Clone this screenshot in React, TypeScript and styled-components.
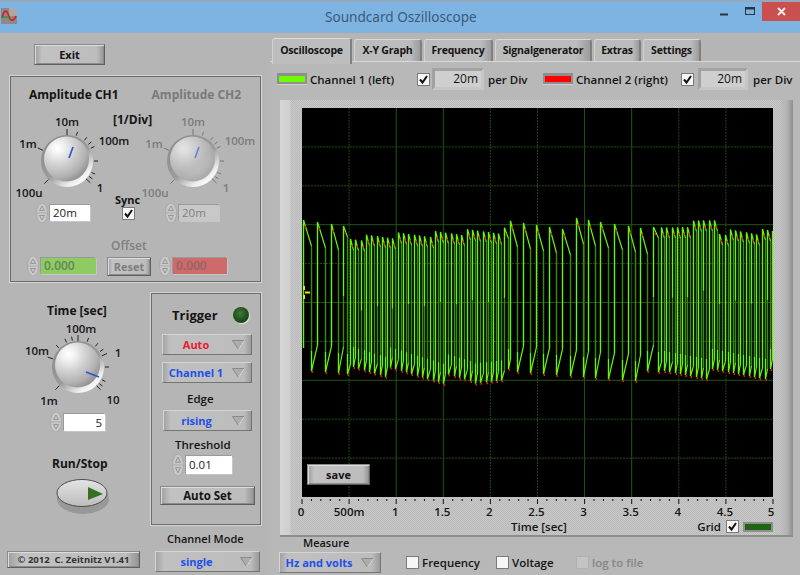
import React from 'react'
import styled, { createGlobalStyle } from 'styled-components'

const GlobalStyle = createGlobalStyle`
  html, body {
    margin: 0;
    padding: 0;
    background: #b5b5b5;
  }
  * {
    box-sizing: border-box;
  }
`

const Page = styled.div`
  width: 800px;
  height: 575px;
  overflow: hidden;
  background: #b5b5b5;
  color: #141414;
  font-family: 'Open Sans', 'Liberation Sans', sans-serif;
  font-size: 12px;
  font-weight: 600;
  display: flex;
  flex-direction: column;
`

const TitleBar = styled.div`
  height: 33px;
  flex: none;
  display: flex;
  align-items: flex-start;
  background: #7eb4e2;
  border-top: 2px solid #93a9bd;
  border-bottom: 1px solid #8fb0cc;
`

const AppIcon = styled.svg`
  width: 16px;
  height: 16px;
  margin: 6px 0 0 1px;
`

const TitleText = styled.div`
  margin: 5px 0 0 308px;
  width: 389px;
  color: #3d5a78;
  font-family: 'Noto Sans', 'Liberation Sans', sans-serif;
  font-size: 13.6px;
  font-weight: 400;
  line-height: 20px;
`

const WindowButton = styled.div<{ $gap?: number; $drop?: number }>`
  width: 21px;
  height: 19px;
  margin-left: ${(p) => p.$gap || 0}px;
  padding-top: ${(p) => p.$drop || 0}px;
  display: flex;
  align-items: center;
  justify-content: center;
`

const CloseButton = styled.div`
  margin-left: auto;
  width: 38px;
  height: 19px;
  background: #c9504f;
  display: flex;
  align-items: center;
  justify-content: center;
`

const Body = styled.div`
  flex: 1;
  display: flex;
  min-height: 0;
`

const LeftColumn = styled.div`
  width: 270px;
  flex: none;
  display: flex;
  flex-direction: column;
`

const RightColumn = styled.div`
  flex: 1;
  display: flex;
  flex-direction: column;
  min-width: 0;
`

const RaisedButton = styled.div<{ $w: number; $h: number }>`
  width: ${(p) => p.$w}px;
  height: ${(p) => p.$h}px;
  display: flex;
  align-items: center;
  justify-content: center;
  flex: none;
  border: 1px solid #5e5e5e;
  border-top-color: #8a8a8a;
  border-left-color: #8a8a8a;
  box-shadow: inset 1px 1px 0 #dcdcdc, inset -1px -1px 0 #8c8c8c;
  background: linear-gradient(90deg, #9e9e9e 0, #c2c2c2 10%, #bcbcbc 90%, #929292 100%);
`

const ExitButton = styled(RaisedButton)`
  margin: 11px 0 0 34px;
  font-size: 11px;
  font-weight: 700;
`

const GroovePanel = styled.div`
  border: 1px solid #d4d4d4;
  outline: 1px solid #6c6c6c;
  outline-offset: -2px;
`

const AmplitudePanel = styled(GroovePanel)`
  margin: 10px 0 0 9px;
  width: 253px;
  height: 208px;
  padding: 10px 0 0 2px;
  flex: none;
`

const AmplitudeTitles = styled.div`
  display: flex;
  height: 18px;
  padding-left: 17px;
  gap: 33px;
  font-size: 12px;
  font-weight: 700;
  line-height: 18px;
`

const DimText = styled.span`
  color: #7a7a7a;
`

const KnobRow = styled.div`
  display: grid;
  grid-template-columns: 101px 41px 1fr;
  margin-top: 9px;
`

const KnobCell = styled.div<{ $dial: number; $spin: number }>`
  display: flex;
  flex-direction: column;
  padding-top: 8px;
  & > svg {
    margin-left: ${(p) => p.$dial}px;
  }
  & > div {
    margin-left: ${(p) => p.$spin}px;
  }
`

const MiddleCell = styled.div`
  display: flex;
  flex-direction: column;
  align-items: flex-start;
`

const DivLabel = styled.div`
  height: 14px;
  line-height: 14px;
  font-weight: 700;
  white-space: nowrap;
`

const SyncLabel = styled.div`
  margin: 66px 0 0 2px;
  height: 14px;
  line-height: 14px;
  font-size: 11px;
  font-weight: 700;
`

const SyncCheck = styled.div`
  margin: 0 0 0 9px;
`

const OffsetLabel = styled.div`
  margin: 16px 0 0 99px;
  height: 14px;
  line-height: 14px;
  color: #808080;
`

const OffsetRow = styled.div`
  display: flex;
  align-items: center;
  margin-top: 3px;
  padding-left: 15px;
`

const ResetButton = styled(RaisedButton)`
  margin: 0 8px 0 11px;
  color: #7e7e7e;
  font-size: 11px;
  font-weight: 700;
`

const SpinnerBox = styled.div<{ $top?: number }>`
  display: flex;
  align-items: center;
  gap: 2px;
  margin-top: ${(p) => p.$top || 0}px;
`

const SpinArrows = styled.svg<{ $h: number }>`
  width: 12px;
  height: ${(p) => p.$h}px;
  flex: none;
`

const Field = styled.div<{ $w: number; $h: number; $bg: string; $fg?: string; $right?: boolean }>`
  width: ${(p) => p.$w}px;
  height: ${(p) => p.$h}px;
  background: ${(p) => p.$bg};
  color: ${(p) => p.$fg || '#222'};
  text-align: ${(p) => (p.$right ? 'right' : 'left')};
  padding: 0 3px;
  line-height: ${(p) => p.$h}px;
  font-size: 11.5px;
  font-weight: 400;
  box-shadow: -1px -1px 0 #9a9a9a, 1px 1px 0 #c6c6c6;
`

const OffsetField = styled(Field)`
  font-size: 12px;
  font-weight: 600;
`

const LowerRow = styled.div`
  flex: 1;
  display: flex;
  min-height: 0;
`

const TimeColumn = styled.div`
  width: 150px;
  flex: none;
  display: flex;
  flex-direction: column;
  align-items: flex-start;
`

const TimeLabel = styled.div`
  margin: 20px 0 0 47px;
  height: 16px;
  line-height: 16px;
  font-weight: 700;
`

const TimeDial = styled.div`
  margin: 8px 0 0 38px;
  height: 80px;
  display: flex;
`

const TimeSpinner = styled.div`
  margin: 5px 0 0 50px;
`

const RunLabel = styled.div`
  margin: 24px 0 0 52px;
  height: 16px;
  line-height: 16px;
  font-weight: 700;
`

const RunIcon = styled.svg`
  margin: 7px 0 0 54px;
  width: 60px;
  height: 40px;
  flex: none;
`

const CopyrightBox = styled(RaisedButton)`
  margin: auto 0 7px 7px;
  font-size: 9.5px;
  font-weight: 700;
  color: #333;
`

const TriggerColumn = styled.div`
  width: 120px;
  flex: none;
  display: flex;
  flex-direction: column;
`

const TriggerPanel = styled(GroovePanel)`
  margin-top: 9px;
  width: 112px;
  height: 234px;
  flex: none;
  display: flex;
  flex-direction: column;
  align-items: flex-start;
  padding: 13px 0 0 9px;
`

const TriggerHead = styled.div`
  display: flex;
  align-items: center;
  height: 18px;
  padding-left: 12px;
  gap: 15px;
  font-size: 13px;
  font-weight: 700;
`

const Led = styled.div`
  width: 16px;
  height: 16px;
  border-radius: 50%;
  background: radial-gradient(circle at 45% 40%, #3f7a34 0, #1f4f1c 55%, #16331a 100%);
  box-shadow: 1px 1px 1px #e2e2e2;
`

const Dropdown = styled.div<{ $w: number; $color: string; $top?: number; $left?: number }>`
  position: relative;
  width: ${(p) => p.$w}px;
  height: 21px;
  margin: ${(p) => p.$top || 0}px 0 0 ${(p) => p.$left || 0}px;
  flex: none;
  display: flex;
  align-items: center;
  padding-right: 22px;
  justify-content: center;
  color: ${(p) => p.$color};
  font-size: 11px;
  font-weight: 700;
  border: 1px solid #8f8f8f;
  border-top-color: #d4d4d4;
  border-left-color: #d4d4d4;
  border-bottom-color: #757575;
  border-right-color: #757575;
  background: linear-gradient(90deg, #a4a4a4 0, #c0c0c0 8%, #bcbcbc 92%, #9a9a9a 100%);
`

const DropArrow = styled.svg`
  position: absolute;
  right: 6px;
  top: 5px;
  width: 13px;
  height: 10px;
`

const TriggerLabel = styled.div<{ $left: number; $top: number }>`
  margin: ${(p) => p.$top}px 0 0 ${(p) => p.$left}px;
  height: 16px;
  line-height: 16px;
  font-size: 11.5px;
  font-weight: 600;
`

const ThresholdRow = styled.div`
  margin: 1px 0 0 12px;
`

const AutoSetButton = styled(RaisedButton)`
  margin-top: 10px;
  font-weight: 700;
  font-size: 11.5px;
`

const ModeLabel = styled.div`
  margin: 5px 0 0 17px;
  height: 16px;
  line-height: 16px;
  font-size: 11px;
  white-space: nowrap;
`

const TabStrip = styled.div`
  margin-top: 4px;
  height: 24px;
  flex: none;
  display: flex;
  align-items: flex-end;
  padding-left: 2px;
  gap: 2px;
  font-size: 10.5px;
  font-weight: 700;
  letter-spacing: -0.2px;
`

const Tab = styled.div<{ $w: number; $active?: boolean }>`
  width: ${(p) => p.$w}px;
  height: ${(p) => (p.$active ? 26 : 22)}px;
  margin-bottom: ${(p) => (p.$active ? -3 : 0)}px;
  padding-bottom: ${(p) => (p.$active ? 3 : 1)}px;
  display: flex;
  align-items: center;
  justify-content: center;
  position: relative;
  z-index: ${(p) => (p.$active ? 2 : 1)};
  background: ${(p) => (p.$active ? '#bdbdbd' : 'linear-gradient(90deg, #bcbcbc 85%, #9c9c9c)')};
  border-top: 1px solid #dadada;
  border-left: 1px solid #d2d2d2;
  border-right: 2px solid #808080;
  border-radius: 3px 3px 0 0;
`

const TabBody = styled.div`
  flex: 1;
  border-top: 1px solid #d8d8d8;
  display: flex;
  flex-direction: column;
  min-height: 0;
  background: #b8b8b8;
`

const ChannelRow = styled.div`
  height: 38px;
  flex: none;
  display: flex;
  align-items: center;
  padding: 0 0 4px 7px;
  font-size: 11.5px;
`

const LegendSwatch = styled.div<{ $color: string }>`
  width: 30px;
  height: 12px;
  margin-top: -1px;
  flex: none;
  padding: 3px 2px;
  background: #8e8e8e;
  border-bottom: 1px solid #cfcfcf;
  &::after {
    content: '';
    display: block;
    height: 6px;
    background: ${(p) => p.$color};
  }
`

const ChannelName = styled.span<{ $w: number }>`
  width: ${(p) => p.$w}px;
  flex: none;
  margin-left: 3px;
  white-space: nowrap;
`

const CheckBox = styled.div<{ $disabled?: boolean }>`
  width: 13px;
  height: 13px;
  flex: none;
  background: ${(p) => (p.$disabled ? '#c4c4c4' : '#f6f6f6')};
  border: 1px solid ${(p) => (p.$disabled ? '#b0b0b0' : '#7a7a7a')};
  display: flex;
  align-items: center;
  justify-content: center;
`

const PerDivField = styled.div<{ $w: number; $gap: number; $lead: number }>`
  width: ${(p) => p.$w}px;
  height: 22px;
  flex: none;
  margin: 0 ${(p) => p.$gap}px 0 ${(p) => p.$lead}px;
  background: #cfcfcf;
  border: 3px solid #a2a2a2;
  border-right-color: #c6c6c6;
  border-bottom-color: #c6c6c6;
  text-align: right;
  padding-right: 3px;
  line-height: 16px;
  font-weight: 400;
  font-size: 12px;
`

const PerDivText = styled.span<{ $w: number }>`
  width: ${(p) => p.$w}px;
  flex: none;
  white-space: nowrap;
`

const ChartFrame = styled.div`
  margin-left: 10px;
  width: 513px;
  height: 437px;
  flex: none;
  position: relative;
  display: flex;
  flex-direction: column;
  padding: 8px 20px 0 22px;
  border-bottom: 2px solid #8c8c8c;
  background:
    linear-gradient(90deg, #d6d6d6 0, #cfcfcf 10px, transparent 11px),
    linear-gradient(270deg, #8e8e8e 0, #b4b4b4 6px, transparent 14px),
    repeating-conic-gradient(#c9c9c9 0 25%, #b9b9b9 0 50%) 0 0 / 2px 2px;
`

const PlotSvg = styled.svg`
  width: 471px;
  height: 389px;
  display: block;
  flex: none;
  background: #000;
`

const AxisSvg = styled.svg`
  width: 471px;
  height: 20px;
  display: block;
  flex: none;
  overflow: visible;
`

const SaveButton = styled(RaisedButton)`
  position: absolute;
  left: 27px;
  top: 364px;
  font-size: 11px;
  font-weight: 700;
`

const ChartFoot = styled.div`
  height: 18px;
  display: flex;
  align-items: center;
  padding-top: 1px;
  font-size: 11.5px;
`

const TimeAxisLabel = styled.span`
  margin-left: 209px;
  width: 199px;
`

const GridText = styled.span`
  margin-right: 5px;
`

const GridSwatch = styled.div`
  width: 30px;
  height: 10px;
  flex: none;
  margin-left: 4px;
  padding: 2px;
  background: #8e8e8e;
  &::after {
    content: '';
    display: block;
    height: 6px;
    background: #1f6413;
  }
`

const MeasureLabel = styled.div`
  margin: -1px 0 0 33px;
  height: 14px;
  line-height: 14px;
  font-size: 11px;
`

const MeasureRow = styled.div`
  display: flex;
  align-items: center;
  padding-left: 9px;
  margin-top: 2px;
  font-size: 11.5px;
`

const MeasureOption = styled.div<{ $w: number; $dim?: boolean }>`
  display: flex;
  align-items: center;
  gap: 3px;
  width: ${(p) => p.$w}px;
  flex: none;
  color: ${(p) => (p.$dim ? '#868686' : 'inherit')};
`

const MeasureGap = styled.div`
  width: 25px;
  flex: none;
`

const Check = () => (
  <svg width="11" height="11" viewBox="0 0 11 11">
    <path d="M2 5.5 L4.5 8.5 L9 2" fill="none" stroke="#111" strokeWidth="2" />
  </svg>
)

const Arrow = () => (
  <DropArrow viewBox="0 0 13 10">
    <path d="M0.5 0.5 H12.5 L6.5 9.5 Z" fill="#adadad" stroke="#8a8a8a" />
    <path d="M12.5 0.5 L6.5 9.5" stroke="#e0e0e0" fill="none" />
  </DropArrow>
)

const Spin = ({ h = 18 }: { h?: number }) => (
  <SpinArrows $h={h} viewBox="0 0 12 20" preserveAspectRatio="none">
    <ellipse cx="6" cy="10" rx="5.5" ry="10" fill="#c8c8c8" stroke="#a0a0a0" strokeWidth="0.6" />
    <path d="M6 3 L8.5 7.5 H3.5 Z M6 17 L8.5 12.5 H3.5 Z" fill="none" stroke="#8a8a8a" strokeWidth="0.8" />
    <path d="M1 10 H11" stroke="#9a9a9a" strokeWidth="0.6" />
  </SpinArrows>
)

interface DialProps {
  id: string
  dim?: boolean
  labels: { text: string; x: number; y: number }[]
  ticks: number[]
  majors: number[]
  pointer: [number, number, number, number]
}

const polar = (deg: number, r: number) => {
  const a = ((deg - 90) * Math.PI) / 180
  return [40 + r * Math.cos(a), 40 + r * Math.sin(a)]
}

const Dial = ({ id, dim, labels, ticks, majors, pointer }: DialProps) => {
  const ink = dim ? '#7c7c7c' : '#141414'
  return (
    <svg width="80" height="80" viewBox="0 0 80 80" style={{ overflow: 'visible', flex: 'none' }}>
      <defs>
        <linearGradient id={`${id}-ring`} x1="0.15" y1="0.1" x2="0.8" y2="0.95">
          <stop offset="0" stopColor="#8c8c8c" />
          <stop offset="0.55" stopColor="#9c9c9c" />
          <stop offset="0.85" stopColor="#ededed" />
          <stop offset="1" stopColor="#ffffff" />
        </linearGradient>
        <radialGradient id={`${id}-ball`} cx="0.3" cy="0.26" r="0.85">
          <stop offset="0" stopColor="#ffffff" />
          <stop offset="0.16" stopColor="#f2f2f2" />
          <stop offset="0.42" stopColor="#d4d4d4" />
          <stop offset="0.75" stopColor="#b2b2b2" />
          <stop offset="1" stopColor="#888888" />
        </radialGradient>
      </defs>
      {ticks.map((t) => {
        const major = majors.includes(t)
        const [x1, y1] = polar(t, major ? 26 : 27)
        const [x2, y2] = polar(t, major ? 32 : 31)
        return <line key={t} x1={x1} y1={y1} x2={x2} y2={y2} stroke={dim ? '#777' : '#222'} strokeWidth="1" />
      })}
      <circle cx="40" cy="40" r="26" fill={`url(#${id}-ring)`} />
      <circle cx="39.5" cy="38" r="22.5" fill={`url(#${id}-ball)`} opacity={dim ? 0.75 : 1} />
      <line
        x1={pointer[0]}
        y1={pointer[1]}
        x2={pointer[2]}
        y2={pointer[3]}
        stroke={dim ? '#5f86c8' : '#2a55cc'}
        strokeWidth="1.6"
      />
      {labels.map((l) => (
        <text
          key={l.text}
          x={l.x}
          y={l.y}
          textAnchor="middle"
          fontFamily="'Open Sans', 'Liberation Sans', sans-serif"
          fontSize="11.5"
          fontWeight="600"
          fill={ink}
        >
          {l.text}
        </text>
      ))}
    </svg>
  )
}

const ampLabels = [
  { text: '10m', x: 40, y: 5 },
  { text: '1m', x: 1, y: 27 },
  { text: '100m', x: 87, y: 24 },
  { text: '100u', x: 2, y: 76 },
  { text: '1', x: 73, y: 71 },
]
const ampTicks = [-135, -66, 0, 20, 40, 52, 62, 90, 115, 125, 133]
const ampMajors = [-135, -66, 0, 133]

const timeLabels = [
  { text: '100m', x: 43, y: 6 },
  { text: '10m', x: -1, y: 28 },
  { text: '1', x: 80, y: 30 },
  { text: '1m', x: 11, y: 78 },
  { text: '10', x: 75, y: 77 },
]
const timeTicks = [-135, -72, -45, -25, -12, 0, 20, 40, 55, 65, 90, 118, 128, 135]
const timeMajors = [-135, -72, 0, 65, 135]

// upper and lower envelope of the captured signal, by screen x
const topAt = (x: number) => {
  if (x < 350) return 118
  if (x < 508) return 130 - (x - 350) * 0.05
  if (x < 661) return 116
  if (x < 715) return 122 - (x - 661) * 0.2
  return 124
}

const bottomAt = (x: number) => {
  if (x < 350) return 268
  if (x < 470) return 260 + (x - 350) * 0.12
  if (x < 508) return 276 - (x - 470) * 0.3
  if (x < 661) return 268
  return 266
}

const buildPeaks = () => {
  const peaks: number[] = [303, 317, 331, 343]
  for (let x = 350; x < 506; x += 5.3) peaks.push(x)
  peaks.push(510, 523, 536, 549, 562, 576, 588, 600, 614, 628, 640, 653)
  for (let x = 661; x < 773; x += 5.3) peaks.push(x)
  return peaks
}

const Waveform = () => {
  const peaks = buildPeaks()
  let bright = ''
  let dark = ''
  const dots: { x: number; y: number }[] = []
  let from = 240
  peaks.forEach((p, i) => {
    const next = peaks[i + 1] ?? p + 5.3
    const w = next - p
    const jitter = ((i * 7919) % 13) - 6
    const slow = w > 8
    const x = Math.round(p - 302) + 0.5
    const fall = Math.round(x + w * (slow ? 0.52 : 0.5)) + 0.5
    const top = topAt(p) + jitter * (slow ? 1 : 0.5)
    const bottom = bottomAt(p) + ((i * 4973) % 11) - 5
    const droop = slow ? 26 : 11
    const rise = slow ? 26 : 10
    const end = Math.round(next - 302) + 0.5
    // every third upstroke only reads bright over its upper part
    const litFrom = i % 3 === 0 && !slow ? top + 70 : from
    dark += `M${x} ${from}L${x} ${top}`
    bright += `M${x} ${litFrom}L${x} ${top}L${fall} ${top + droop}`
    dark += `M${fall} ${top + droop}L${fall} ${bottom}`
    bright += `M${fall} ${bottom - 20}L${fall} ${bottom}L${end} ${bottom - rise}`
    from = bottom - rise
    dots.push({ x: x + 1, y: top + 6 }, { x: fall, y: bottom })
  })
  return (
    <>
      <path d={dark} fill="none" stroke="#3a8c00" strokeWidth="1.4" />
      <path d={bright} fill="none" stroke="#68f500" strokeWidth="1.2" />
      {dots.map((d, i) => (
        <rect key={i} x={d.x} y={d.y} width="1.5" height="2" fill="#e02010" />
      ))}
    </>
  )
}

const solidCols = [2, 3, 6, 7]
const solidRows = [3, 5, 7]

const PlotGrid = () => (
  <>
    {Array.from({ length: 9 }, (_, i) => i + 1).map((i) => (
      <line
        key={i}
        x1={i * 47.1}
        y1="0"
        x2={i * 47.1}
        y2="389"
        stroke={solidCols.includes(i) ? '#22560f' : '#1d4d0e'}
        strokeWidth="1"
        strokeDasharray={solidCols.includes(i) ? undefined : '2 1'}
      />
    ))}
    {Array.from({ length: 9 }, (_, i) => i + 1).map((i) => (
      <line
        key={i}
        x1="0"
        y1={i * 38.9}
        x2="471"
        y2={i * 38.9}
        stroke={solidRows.includes(i) ? '#22560f' : '#1d4d0e'}
        strokeWidth="1"
        strokeDasharray={solidRows.includes(i) ? undefined : '2 1'}
      />
    ))}
  </>
)

const axisLabels = ['0', '500m', '1', '1.5', '2', '2.5', '3', '3.5', '4', '4.5', '5']

const TimeAxis = () => (
  <AxisSvg viewBox="0 0 471 20">
    {Array.from({ length: 51 }, (_, i) => (
      <line
        key={i}
        x1={i * 9.42}
        y1="2"
        x2={i * 9.42}
        y2={i % 5 === 0 ? 7 : 4}
        stroke="#111"
        strokeWidth="1"
      />
    ))}
    {axisLabels.map((l, i) => (
      <text
        key={l}
        x={i * 47.1 - (i === 10 ? 1 : 0) + (i === 1 ? 0 : -1)}
        y="19"
        textAnchor="middle"
        fontFamily="'Open Sans', 'Liberation Sans', sans-serif"
        fontSize="11.5"
        fontWeight="600"
        fill="#141414"
      >
        {l}
      </text>
    ))}
  </AxisSvg>
)

const App: React.FC = () => {
  return (
    <Page>
      <GlobalStyle />
      <TitleBar>
        <AppIcon viewBox="0 0 16 16">
          <rect width="16" height="16" fill="#8a8a8a" />
          <rect x="8" width="8" height="8" fill="#a9a9a9" />
          <path d="M1 10 C3 1 6 1 8 9" fill="none" stroke="#e01818" strokeWidth="1.6" />
          <path d="M8 9 C10 14 13 13 15 8" fill="none" stroke="#e01818" strokeWidth="1.6" />
          <path d="M1 9 H8" stroke="#1c9a2c" strokeWidth="1.2" />
        </AppIcon>
        <TitleText>Soundcard Oszilloscope</TitleText>
        <WindowButton $drop={5}>
          <svg width="9" height="3" viewBox="0 0 9 3">
            <rect y="0.5" width="8" height="2" fill="#2a3440" />
          </svg>
        </WindowButton>
        <WindowButton $gap={5}>
          <svg width="11" height="9" viewBox="0 0 11 9">
            <rect x="0.5" y="0.5" width="9" height="7" fill="none" stroke="#2a3440" />
            <rect x="0.5" y="0.5" width="9" height="2" fill="#2a3440" />
          </svg>
        </WindowButton>
        <CloseButton>
          <svg width="9" height="9" viewBox="0 0 9 9">
            <path d="M1 1 L8 8 M8 1 L1 8" stroke="#f4eaea" strokeWidth="2" />
          </svg>
        </CloseButton>
      </TitleBar>
      <Body>
        <LeftColumn>
          <ExitButton $w={71} $h={21}>Exit</ExitButton>
          <AmplitudePanel>
            <AmplitudeTitles>
              <span>Amplitude CH1</span>
              <DimText>Amplitude CH2</DimText>
            </AmplitudeTitles>
            <KnobRow>
              <KnobCell $dial={15} $spin={24}>
                <Dial id="ch1" labels={ampLabels} ticks={ampTicks} majors={ampMajors} pointer={[46, 26, 42, 37]} />
                <SpinnerBox $top={2}>
                  <Spin h={20} />
                  <Field $w={40} $h={16} $bg="#ffffff">20m</Field>
                </SpinnerBox>
              </KnobCell>
              <MiddleCell>
                <DivLabel>[1/Div]</DivLabel>
                <SyncLabel>Sync</SyncLabel>
                <SyncCheck>
                  <CheckBox><Check /></CheckBox>
                </SyncCheck>
              </MiddleCell>
              <KnobCell $dial={-1} $spin={11}>
                <Dial id="ch2" dim labels={ampLabels} ticks={ampTicks} majors={ampMajors} pointer={[46, 26, 42, 37]} />
                <SpinnerBox $top={2}>
                  <Spin h={20} />
                  <Field $w={40} $h={16} $bg="#c8c8c8" $fg="#808080">20m</Field>
                </SpinnerBox>
              </KnobCell>
            </KnobRow>
            <OffsetLabel>Offset</OffsetLabel>
            <OffsetRow>
              <SpinnerBox>
                <Spin h={20} />
                <OffsetField $w={55} $h={16} $bg="#8ecb62" $fg="#64855a">0.000</OffsetField>
              </SpinnerBox>
              <ResetButton $w={44} $h={19}>Reset</ResetButton>
              <SpinnerBox>
                <Spin h={20} />
                <OffsetField $w={54} $h={16} $bg="#cf6a6a" $fg="#8e6666">0.000</OffsetField>
              </SpinnerBox>
            </OffsetRow>
          </AmplitudePanel>
          <LowerRow>
            <TimeColumn>
              <TimeLabel>Time [sec]</TimeLabel>
              <TimeDial>
                <Dial
                  id="time"
                  labels={timeLabels}
                  ticks={timeTicks}
                  majors={timeMajors}
                  pointer={[48, 45, 61, 50]}
                />
              </TimeDial>
              <TimeSpinner>
                <SpinnerBox>
                  <Spin h={20} />
                  <Field $w={41} $h={17} $bg="#ffffff" $right>5</Field>
                </SpinnerBox>
              </TimeSpinner>
              <RunLabel>Run/Stop</RunLabel>
              <RunIcon viewBox="0 0 60 40">
                <defs>
                  <linearGradient id="run-face" x1="0" y1="0" x2="0" y2="1">
                    <stop offset="0" stopColor="#e4e4e4" />
                    <stop offset="1" stopColor="#bcbcbc" />
                  </linearGradient>
                </defs>
                <ellipse cx="29" cy="20" rx="26" ry="15" fill="#989898" />
                <ellipse cx="28" cy="14" rx="25" ry="13.5" fill="url(#run-face)" stroke="#4c4c4c" strokeWidth="1" />
                <path d="M34 8 L49 15 L34 21 Z" fill="#37701f" />
              </RunIcon>
              <CopyrightBox $w={133} $h={17}>© 2012&nbsp; C. Zeitnitz V1.41</CopyrightBox>
            </TimeColumn>
            <TriggerColumn>
              <TriggerPanel>
                <TriggerHead>
                  <span>Trigger</span>
                  <Led />
                </TriggerHead>
                <Dropdown $w={90} $color="#f01830" $top={10} $left={2}>
                  Auto
                  <Arrow />
                </Dropdown>
                <Dropdown $w={90} $color="#2050e8" $top={7} $left={2}>
                  Channel 1
                  <Arrow />
                </Dropdown>
                <TriggerLabel $left={27} $top={8}>Edge</TriggerLabel>
                <Dropdown $w={89} $color="#2050e8" $top={3} $left={3}>
                  rising
                  <Arrow />
                </Dropdown>
                <TriggerLabel $left={15} $top={6}>Threshold</TriggerLabel>
                <ThresholdRow>
                  <SpinnerBox>
                    <Spin h={22} />
                    <Field $w={46} $h={18} $bg="#ffffff">0.01</Field>
                  </SpinnerBox>
                </ThresholdRow>
                <AutoSetButton $w={95} $h={19}>Auto Set</AutoSetButton>
              </TriggerPanel>
              <ModeLabel>Channel Mode</ModeLabel>
              <Dropdown $w={105} $color="#2050e8" $top={4} $left={5}>
                single
                <Arrow />
              </Dropdown>
            </TriggerColumn>
          </LowerRow>
        </LeftColumn>
        <RightColumn>
          <TabStrip>
            <Tab $w={80} $active>Oscilloscope</Tab>
            <Tab $w={68}>X-Y Graph</Tab>
            <Tab $w={69}>Frequency</Tab>
            <Tab $w={97}>Signalgenerator</Tab>
            <Tab $w={47}>Extras</Tab>
            <Tab $w={58}>Settings</Tab>
          </TabStrip>
          <TabBody>
            <ChannelRow>
              <LegendSwatch $color="#70fc00" />
              <ChannelName $w={107}>Channel 1 (left)</ChannelName>
              <CheckBox><Check /></CheckBox>
              <PerDivField $w={52} $gap={4} $lead={2}>20m</PerDivField>
              <PerDivText $w={55}>per Div</PerDivText>
              <LegendSwatch $color="#ff0000" />
              <ChannelName $w={105}>Channel 2 (right)</ChannelName>
              <CheckBox><Check /></CheckBox>
              <PerDivField $w={50} $gap={5} $lead={4}>20m</PerDivField>
              <PerDivText $w={40}>per Div</PerDivText>
            </ChannelRow>
            <ChartFrame>
              <PlotSvg viewBox="0 0 471 389">
                <PlotGrid />
                <Waveform />
                <path d="M2 178 V182 M2 187 V191 M3 184.5 H8" stroke="#f4e800" strokeWidth="2" fill="none" />
              </PlotSvg>
              <TimeAxis />
              <ChartFoot>
                <TimeAxisLabel>Time [sec]</TimeAxisLabel>
                <GridText>Grid</GridText>
                <CheckBox><Check /></CheckBox>
                <GridSwatch />
              </ChartFoot>
              <SaveButton $w={63} $h={21}>save</SaveButton>
            </ChartFrame>
            <MeasureLabel>Measure</MeasureLabel>
            <MeasureRow>
              <Dropdown $w={102} $color="#2050e8">
                Hz and volts
                <Arrow />
              </Dropdown>
              <MeasureGap />
              <MeasureOption $w={90}>
                <CheckBox />
                Frequency
              </MeasureOption>
              <MeasureOption $w={80}>
                <CheckBox />
                Voltage
              </MeasureOption>
              <MeasureOption $w={80} $dim>
                <CheckBox $disabled />
                log to file
              </MeasureOption>
            </MeasureRow>
          </TabBody>
        </RightColumn>
      </Body>
    </Page>
  )
}

export default App
